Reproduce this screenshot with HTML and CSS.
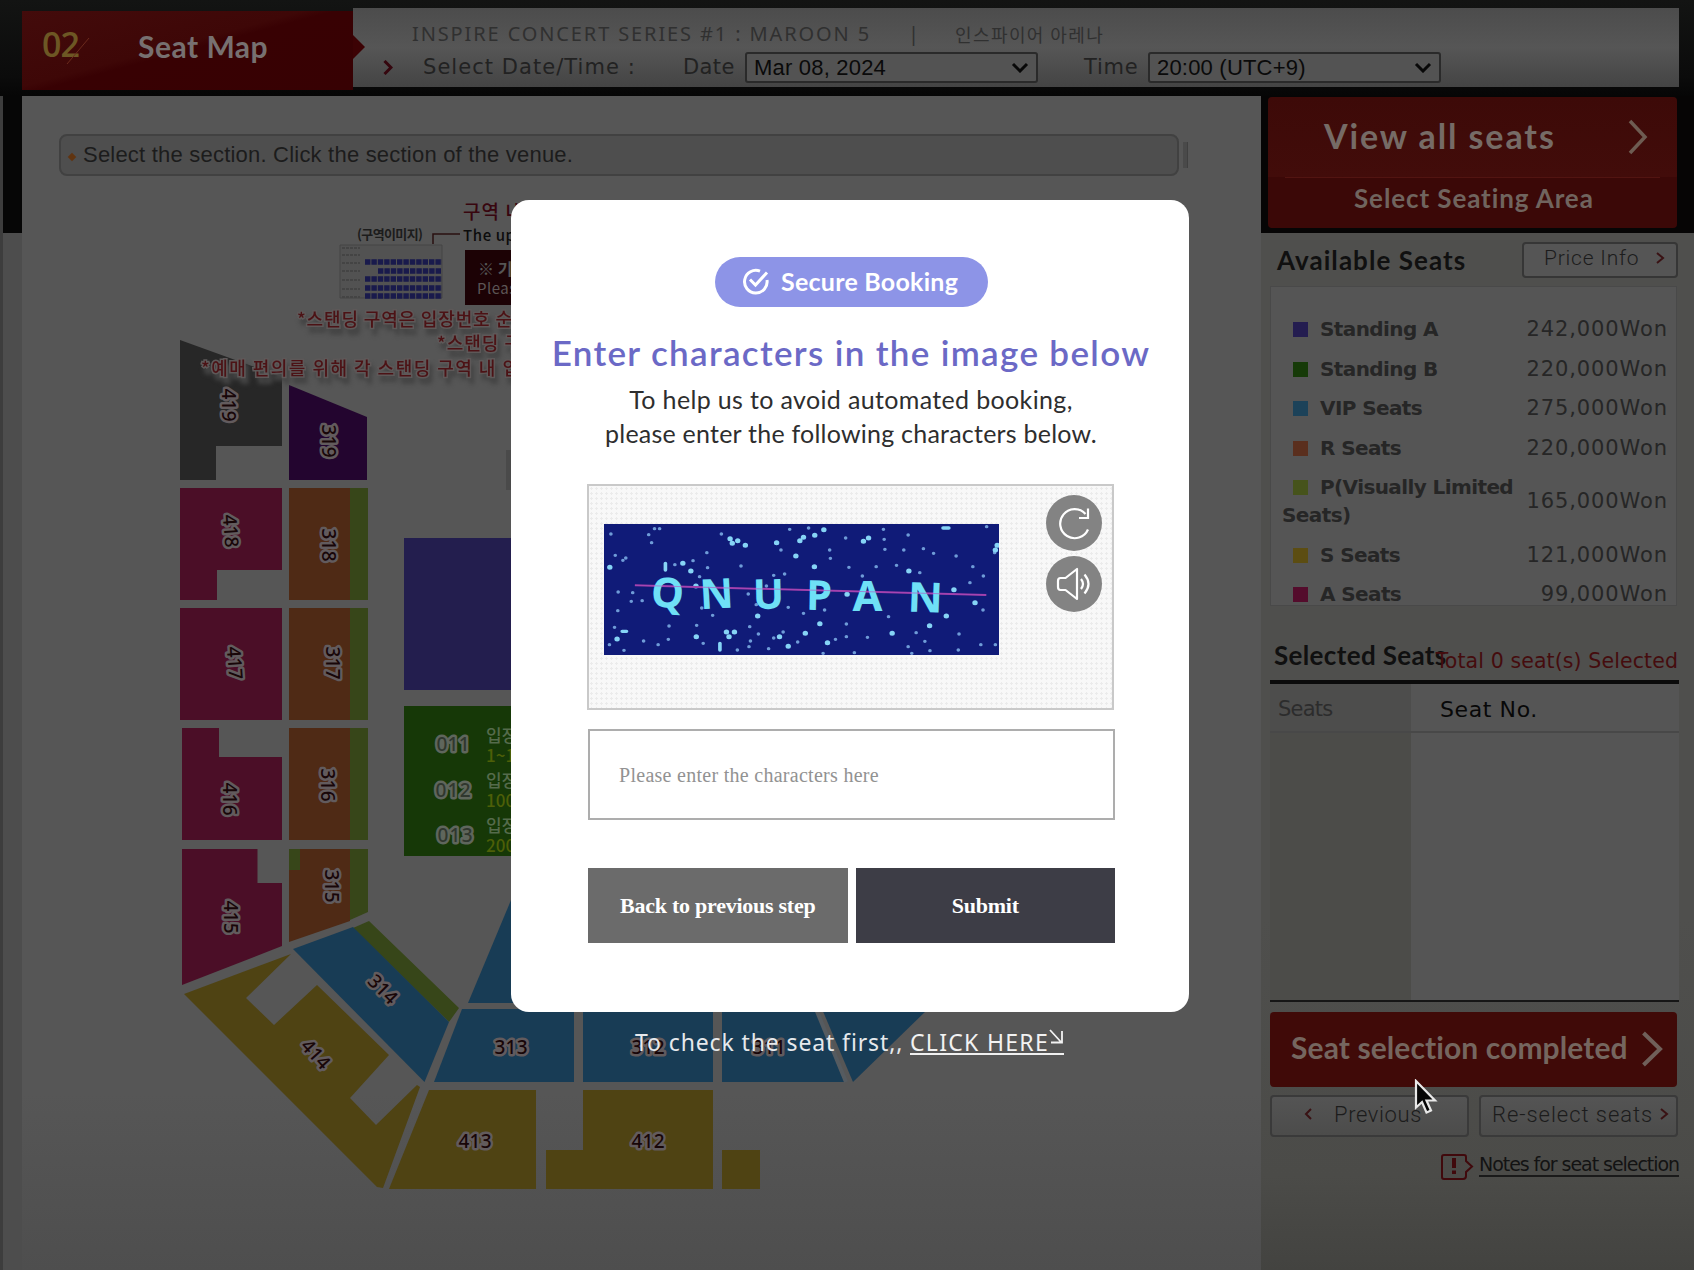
FILE: index.html
```html
<!DOCTYPE html>
<html lang="en">
<head>
<meta charset="utf-8">
<title>Seat Map</title>
<link rel="stylesheet" href="styles.css">
</head>
<body>
<div class="page">
  <header class="top">
    <div class="step"><span class="step-no">02</span><svg class="slash" width="24" height="28" viewBox="0 0 24 28"><path d="M23 1L1 27" stroke="#6b2a1c" fill="none"/></svg><h1 class="step-name">Seat Map</h1></div>
    <div class="info">
      <svg class="notch" width="12" height="24" viewBox="0 0 12 24"><path d="M0 0L12 12L0 24Z" fill="#3c0204"/></svg>
      <div class="info-line first"><span class="concert">INSPIRE CONCERT SERIES #1 : MAROON 5</span><span class="bar">|</span><span class="venue">인스파이어 아레나</span></div>
      <div class="info-line second">
        <svg class="chev" width="10" height="15" viewBox="0 0 10 15"><path d="M1.500 1L8 7.500L1.500 14" fill="none" stroke="#35060e" stroke-width="3"/></svg>
        <span class="lbl-dt">Select Date/Time :</span>
        <span class="lbl-date">Date</span>
        <div class="select date"><span>Mar 08, 2024</span><svg width="18" height="11" viewBox="0 0 18 11"><path d="M2 2L9 9L16 2" fill="none" stroke="#080808" stroke-width="3"/></svg></div>
        <span class="lbl-time">Time</span>
        <div class="select time"><span>20:00 (UTC+9)</span><svg width="18" height="11" viewBox="0 0 18 11"><path d="M2 2L9 9L16 2" fill="none" stroke="#080808" stroke-width="3"/></svg></div>
      </div>
    </div>
  </header>

  <div class="body">
    <div class="gutter"></div>
    <main class="main">
      <div class="notice-row"><div class="notice"><i class="diamond"></i><span>Select the section. Click the section of the venue.</span></div><i class="sliver"></i></div>
      <svg class="map" width="1239" height="1080" viewBox="22 190 1239 1080">
        <g font-family="'Noto Sans CJK KR', sans-serif">
          <text x="463" y="219" font-size="19" fill="#38060f" textLength="60" font-weight="500">구역 내</text>
          <text x="357" y="239" font-size="13" font-weight="700" fill="#1c1c1c" textLength="66">(구역이미지)</text>
          <text x="463" y="241" font-size="15" font-weight="500" fill="#0c0c0c" textLength="62">The upp</text>
          <path d="M433 244V234H460" fill="none" stroke="#2a1010" stroke-width="1.500"/>
          <path d="M340 245H442V298H340Z" fill="#525252" stroke="#444"/>
          <path d="M342 248h18M342 255h18M342 263h18M342 271h18M342 280h18M342 289h18M342 297h18" stroke="#444" stroke-width="2" stroke-dasharray="3 1"/>
          <path d="M365 262h77M378 271h64M365 279h77M365 288h77M365 296h77" stroke="#191a4c" stroke-width="5.500" stroke-dasharray="5.400 1"/>
          <rect x="465" y="250" width="60" height="55" fill="#1c0205"/>
          <text x="478" y="275" font-size="16" font-weight="700" fill="#555">※ 기</text>
          <text x="477" y="294" font-size="15" fill="#5c5555" textLength="48">Please</text>
        </g>
        <path fill="#272727" d="M180 340L282 377V446H216V480H180Z"/>
        <path fill="#23052f" d="M289 385L367 417V480H289Z"/>
        <g fill="#4b0e27">
          <path d="M180 488H282V570H217V600H180Z"/><path d="M180 608H282V720H180Z"/>
          <path d="M182 728H219V757H282V840H182Z"/><path d="M182 849H257.500V883H282V946L182 985Z"/>
        </g>
        <g fill="#4f2a15"><path d="M289 488H350V600H289ZM289 608H350V720H289ZM289 728H350V840H289ZM289 849H350V921L289 942Z"/></g>
        <g fill="#374619"><path d="M350 488H368V600H350ZM350 608H368V720H350ZM350 728H368V840H350ZM350 849H368V912L350 920ZM289 849H300V870H289ZM353 928L369 921L459 1008L449 1022Z"/></g>
        <path fill="#231e4e" d="M404 538H560V690H404Z"/>
        <path fill="#163807" d="M404 706H560V856H404Z"/>
        <path fill="#4a4a4a" d="M506 450H520V490H506Z"/>
        <g fill="#183c55">
          <path d="M293 949L353 927L449 1022L424.500 1082Z"/><path d="M468 1003L511 900H700V1003Z"/>
          <path d="M462 1009H574V1082H434Z"/><path d="M583 1009H713V1082H583Z"/>
          <path d="M722 1009H815L844.500 1082H722Z"/><path d="M822 1009H928L853 1082Z"/>
        </g>
        <g fill="#4f4313">
          <path d="M184 994L291 954L246 998L274 1025L317 985L389 1055L350 1098L376 1125L417 1085L420 1087L383 1188L377 1187Z"/>
          <path d="M429 1090H536V1189H389Z"/><path d="M583 1090H713V1189H546V1150H583Z"/><path d="M722 1150H760V1189H722Z"/>
        </g>
        <path d="M816 1009L846 1082" stroke="#555b60" stroke-width="4"/>
        <g class="caption">
          <text x="297" y="326" textLength="215">*스탠딩 구역은 입장번호 순</text>
          <text x="437" y="350" textLength="84">*스탠딩 구</text>
          <text x="201" y="375" textLength="318">*예매 편의를 위해 각 스탠딩 구역 내 입</text>
        </g>
        <g class="num">
          <text transform="translate(229 405) rotate(90)" y="7" textLength="33">419</text>
          <text transform="translate(329 441) rotate(90)" y="7" textLength="33">319</text>
          <text transform="translate(231 531) rotate(86)" y="7" textLength="33">418</text>
          <text transform="translate(329 545) rotate(90)" y="7" textLength="33">318</text>
          <text transform="translate(235 663) rotate(86)" y="7" textLength="33">417</text>
          <text transform="translate(333 663) rotate(90)" y="7" textLength="33">317</text>
          <text transform="translate(230 799) rotate(90)" y="7" textLength="33">416</text>
          <text transform="translate(328 785) rotate(90)" y="7" textLength="33">316</text>
          <text transform="translate(231 917) rotate(90)" y="7" textLength="33">415</text>
          <text transform="translate(332 886) rotate(90)" y="7" textLength="33">315</text>
          <text transform="translate(383 989) rotate(45)" y="7" textLength="33">314</text>
          <text transform="translate(316 1054) rotate(48)" y="7" textLength="33">414</text>
          <text x="511" y="1054" textLength="33">313</text>
          <text x="648" y="1054" textLength="33">312</text>
          <text x="769" y="1054" textLength="33">311</text>
          <text x="475" y="1148" textLength="33">413</text>
          <text x="648" y="1148" textLength="33">412</text>
          <text class="light" x="453" y="751" textLength="33">011</text>
          <text class="light" x="453" y="797" textLength="35">012</text>
          <text class="light" x="455" y="842" textLength="35">013</text>
        </g>
        <g class="gate">
          <text x="486" y="742" fill="#556b4c">입장</text><text x="486" y="762" class="y">1~100</text>
          <text x="486" y="787" fill="#556b4c">입장</text><text x="486" y="807" class="y">100~</text>
          <text x="486" y="832" fill="#556b4c">입장</text><text x="486" y="852" class="y">200~</text>
        </g>
      </svg>
    </main>

    <aside class="side">
      <div class="views">
        <div class="view-all"><span>View all seats</span><svg width="20" height="36" viewBox="0 0 20 36"><path d="M2 2L17 18L2 34" fill="none" stroke="#6e5c52" stroke-width="3.500"/></svg></div>
        <div class="select-area">Select Seating Area</div>
      </div>
      <div class="avail-head"><h2>Available Seats</h2><div class="btn price"><span>Price Info</span><svg width="9" height="12" viewBox="0 0 9 12"><path d="M1 1L7 6L1 11" fill="none" stroke="#3a1214" stroke-width="2"/></svg></div></div>
      <div class="prices">
        <div class="row"><span class="name"><i class="sw a"></i>Standing A</span><span class="won">242,000Won</span></div>
        <div class="row"><span class="name"><i class="sw b"></i>Standing B</span><span class="won">220,000Won</span></div>
        <div class="row"><span class="name"><i class="sw v"></i>VIP Seats</span><span class="won">275,000Won</span></div>
        <div class="row"><span class="name"><i class="sw r"></i>R Seats</span><span class="won">220,000Won</span></div>
        <div class="row tall"><span class="name"><i class="sw p"></i>P(Visually Limited<br>Seats)</span><span class="won">165,000Won</span></div>
        <div class="row"><span class="name"><i class="sw s"></i>S Seats</span><span class="won">121,000Won</span></div>
        <div class="row"><span class="name"><i class="sw m"></i>A Seats</span><span class="won">99,000Won</span></div>
      </div>
      <div class="sel-head"><h2>Selected Seats</h2><span class="total">Total 0 seat(s) Selected</span></div>
      <div class="table">
        <div class="th left">Seats</div><div class="th">Seat No.</div>
        <div class="td left"></div><div class="td"></div>
      </div>
      <div class="complete"><span>Seat selection completed</span><svg width="22" height="36" viewBox="0 0 22 36"><path d="M2.500 2L19 18L2.500 34" fill="none" stroke="#70605a" stroke-width="4"/></svg></div>
      <div class="pair">
        <div class="btn prev"><svg width="8" height="12" viewBox="0 0 8 12"><path d="M7 1L2 6L7 11" fill="none" stroke="#3a1214" stroke-width="2"/></svg><span>Previous</span></div>
        <div class="btn resel"><span>Re-select seats</span><svg width="9" height="12" viewBox="0 0 9 12"><path d="M1 1L7 6L1 11" fill="none" stroke="#3a1214" stroke-width="2"/></svg></div>
      </div>
      <div class="notes"><svg width="33" height="26" viewBox="0 0 33 26"><path d="M3 1H23Q25 1 25 3V7L31 12.500L25 18V22Q25 25 22 25H3Q1 25 1 23V3Q1 1 3 1Z" fill="none" stroke="#40090c" stroke-width="2"/><path d="M13 4V14M13 16.500V20" stroke="#40090c" stroke-width="4"/></svg><a>Notes for seat selection</a></div>
    </aside>
  </div>

  <section class="modal">
    <div class="pill"><svg width="28" height="28" viewBox="0 0 28 28"><path d="M18 3.200A11.300 11.300 0 1 0 25 12" fill="none" stroke="#fff" stroke-width="3"/><path d="M8 11.500L13.500 17L25 4.500" fill="none" stroke="#fff" stroke-width="3"/></svg><span>Secure Booking</span></div>
    <h2 class="title">Enter characters in the image below</h2>
    <p class="help"><span class="l1">To help us to avoid automated booking,</span><br><span class="l2">please enter the following characters below.</span></p>
    <div class="captcha">
      <svg class="shot" width="395" height="131" viewBox="93 162 1087 393" preserveAspectRatio="none">
        <rect x="93" y="162" width="1087" height="393" fill="#101b78"/>
        <g fill="none" stroke-linecap="round">
          <path stroke="#6f9cd8" stroke-width="10" d="M216 194h0M232 176h0M246 176h0M224 218h0M112 192h0M124 256h0M145 271h0M153 264h0M288 284h0M338 272h0M376 248h0M416 192h0M378 293h0M356 320h0M470 288h0M490 372h0M540 348h0M580 240h0M590 312h0M560 316h0M604 178h0M656 174h0M714 240h0M716 265h0M758 204h0M767 292h0M804 318h0M842 290h0M862 178h0M864 208h0M930 195h0M918 240h0M866 238h0M898 286h0M962 308h0M972 236h0M1000 250h0M1062 258h0M1100 338h0M1108 290h0M1146 170h0M1168 248h0M1137 318h0M132 366h0M172 368h0M131 422h0M168 394h0M198 392h0M122 472h0M108 524h0M148 541h0M202 513h0M242 524h0M270 508h0M272 468h0M348 466h0M366 520h0M392 436h0M362 414h0M496 513h0M494 470h0M492 530h0M460 540h0M518 492h0M560 504h0M586 486h0M546 536h0M626 516h0M696 550h0M730 508h0M760 462h0M760 500h0M782 548h0M818 502h0M952 488h0M976 514h0M990 542h0M1070 492h0M1068 540h0M1130 524h0M1170 524h0M1136 420h0M930 530h0M940 550h0M876 440h0M600 412h0M512 404h0M642 430h0M700 420h0"/>
          <path stroke="#86d4f6" stroke-width="15" d="M109 292h0M310 280h0M332 303h0M440 206h0M446 220h0M461 212h0M482 226h0M568 218h0M621 258h0M632 212h0M642 202h0M673 196h0M698 179h0M672 290h0M807 214h0M821 204h0M932 303h0M1175 226h0M1170 240h0M346 348h0M516 438h0M687 461h0M647 490h0M600 529h0M886 490h0M989 467h0M1035 438h0M1056 359h0M1114 398h0M347 500h0M129 507h0M430 486h0M437 500h0M452 486h0M708 518h0M762 373h0M576 500h0"/>
          <path stroke="#86d4f6" stroke-width="10" d="M262 280v20M1026 174h16M143 484h12M412 520v20"/>
        </g>
        <path d="M178 346L1145 375" stroke="#9a3ca4" stroke-width="6"/>
        <g class="letters">
          <text transform="translate(265 412) scale(.92 1) rotate(4)">Q</text><text transform="translate(405 415) scale(.92 1) rotate(-3)">N</text><text transform="translate(546 416) scale(.92 1) rotate(-1)">U</text><text transform="translate(684 420) scale(.92 1) rotate(1)">P</text><text transform="translate(818 424) scale(.96 1)">A</text><text transform="translate(976 426) scale(.96 1) rotate(2)">N</text>
        </g>
        <path d="M178 346L1145 375" stroke="#b04cc0" stroke-opacity=".6" stroke-width="3"/>
      </svg>
      <div class="tools">
        <svg width="56" height="56" viewBox="0 0 56 56"><circle cx="28" cy="28" r="28" fill="#838383"/><path d="M42 34.500A14.500 14.500 0 1 1 39.500 19" fill="none" stroke="#fff" stroke-width="2.200"/><path d="M42 13.500V23H33" fill="none" stroke="#fff" stroke-width="2.200"/></svg>
        <svg width="56" height="56" viewBox="0 0 56 56"><circle cx="28" cy="28" r="28" fill="#838383"/><path d="M31 13V43L19.500 34H14.500Q12 34 12 31V25Q12 22 14.500 22H19.500Z" fill="none" stroke="#fff" stroke-width="2.200" stroke-linejoin="round"/><path d="M35 23Q39 28 35 33M38.500 18.500Q46.500 28 38.500 37.500" fill="none" stroke="#fff" stroke-width="2.200"/></svg>
      </div>
    </div>
    <div class="field"><span>Please enter the characters here</span></div>
    <div class="actions"><div class="back">Back to previous step</div><div class="submit">Submit</div></div>
  </section>
  <div class="check-first"><span class="cf">To check the seat first,,</span><a><span>CLICK HERE</span><svg width="16" height="18" viewBox="0 0 16 18"><path d="M1 1L12 13M13 2V13.500H2" fill="none" stroke="#f2f2f2" stroke-width="1.800"/></svg></a></div>
  <svg class="cursor" width="24" height="37" viewBox="0 0 24 37"><path d="M2 2V28.500L8 23L12.500 33.500L17 31.500L12.500 21.500H21Z" fill="#050505" stroke="#e8e8e8" stroke-width="2.200"/></svg>
</div>
</body>
</html>
```
FILE: styles.css
```css
* { box-sizing: border-box; }
body { margin: 0; background: #555; }
h1, h2, p { margin: 0; }
svg { display: block; flex: none; }
.page { position: relative; width: 1694px; height: 1270px; overflow: hidden; background: #0c0c0c; font-family: "DejaVu Sans", sans-serif; white-space: nowrap; }

.top { display: flex; height: 96px; padding: 8px 15px 9px 22px; background: linear-gradient(#131413, #0b0b0b 80%, #060606); }
.step { display: flex; align-items: center; width: 331px; height: 79px; margin-top: 3px; padding-left: 20px; background: linear-gradient(165deg, #430b0b, #3e0707 45%, #380103 50%, #370103); }
.step-no { width: 38px; color: #6d5724; font: 600 34px/40px "Open Sans", sans-serif; letter-spacing: -1px; margin-top: -14px; }
.slash { margin-left: -14px; }
.step-name { margin: -9px 0 0 48px; color: #777070; font: 700 30px/40px Lato, sans-serif; letter-spacing: .5px; }
.info { position: relative; flex: 1; background: linear-gradient(#4c4c4c, #565656 50%, #444); }
.notch { position: absolute; left: 0; top: 27px; }
.info-line { display: flex; align-items: center; }
.first { height: 36px; padding: 16px 0 0 59px; color: #303030; font: 20px/24px "Noto Sans", sans-serif; }
.concert { width: 496px; letter-spacing: 1.88px; }
.bar { width: 47px; }
.venue { font: 18px/24px "Noto Sans CJK KR", sans-serif; letter-spacing: 1.4px; }
.second { height: 44px; margin-top: 1px; padding-left: 30px; color: #222; font-size: 21px; }
.lbl-dt { width: 260px; margin-left: 30px; letter-spacing: 1.05px; margin-top: -1px; }
.lbl-date { width: 62px; letter-spacing: .4px; margin-top: -1px; }
.lbl-time { width: 64px; margin-left: 46px; letter-spacing: .8px; margin-top: -1px; }
.select { display: flex; align-items: center; justify-content: space-between; width: 293px; height: 31px; padding: 0 7px 0 7px; border: 2px solid #2a2a2a; border-radius: 3px; background: #535353; color: #0a0a0a; font: 22px "Liberation Sans", sans-serif; letter-spacing: .2px; }
.select span { margin-top: 2px; }

.body { display: flex; height: 1174px; background: #555; }
.gutter { width: 22px; border-left: 3px solid #3d3d3d; background: linear-gradient(#060606 137px, #4d4d4d 137px); }
.main { width: 1239px; padding-top: 38px; background: linear-gradient(#565656 85%, #4e4e4e); }
.notice-row { display: flex; align-items: center; height: 42px; padding-left: 37px; }
.notice { display: flex; align-items: center; width: 1120px; height: 42px; padding-left: 8px; border: 2px solid #414141; border-radius: 8px; background: #4e4e4e; color: #1c1c1c; font: 22px "Liberation Sans", sans-serif; }
.notice span { margin: 0 0 0 8px; letter-spacing: .21px; }
.diamond { width: 6px; height: 6px; margin-top: 3px; background: #603410; transform: rotate(45deg); }
.sliver { width: 5px; height: 26px; margin-left: 4px; background: #4a4a4a; border-right: 1px solid #404040; }
.map { margin-top: 14px; }
.caption text { font: 500 18px "Noto Sans CJK KR", sans-serif; fill: #4c1215; stroke: #5d5858; stroke-width: 3px; paint-order: stroke; filter: drop-shadow(3px 6px 2px #444); }
.num text { font: 500 19px "Noto Sans", sans-serif; text-anchor: middle; fill: #180608; stroke: #625b5d; stroke-width: 5px; stroke-linejoin: round; paint-order: stroke; }
.num .light { fill: #30372e; stroke: #5f665c; }
.gate text { font: 500 17px "Noto Sans CJK KR", sans-serif; }
.gate .y { fill: #4d5f08; }

.side { width: 433px; background: linear-gradient(#4f4f4d 70%, #4b4b48 92%, #434340); }
.views { height: 137px; padding: 1px 17px 5px 7px; background: #060505; }
.view-all { display: flex; align-items: center; justify-content: space-between; height: 80px; margin: 0; padding: 0 29px 0 56px; border-radius: 4px 4px 0 0; background: linear-gradient(#3d0a08, #420c0a); color: #766b66; font: 700 34px Lato, sans-serif; letter-spacing: 1.9px; }
.view-all span { margin-top: -3px; }
.select-area { height: 51px; border-radius: 0 0 4px 4px; padding-left: 86px; background: linear-gradient(#521411, #521411) 17px 0 / 375px 1px no-repeat, #3b0807; color: #70645e; font: 700 26px/43px Lato, sans-serif; letter-spacing: .9px; }
.avail-head { display: flex; justify-content: space-between; align-items: flex-start; height: 53px; padding: 8px 16px 0 16px; }
.side h2 { color: #101010; font: 700 26px/38px Lato, sans-serif; letter-spacing: 1.05px; }
.btn { display: flex; align-items: center; border: 2px solid #363636; border-radius: 4px; background: #555; color: #1c1c1c; font: 300 21px Roboto, sans-serif; }
.price { width: 156px; height: 36px; margin-top: 1px; padding: 0 11px 4px 20px; justify-content: space-between; letter-spacing: .8px; }
.prices { width: 407px; height: 320px; margin-left: 9px; padding: 22px 9px 0 11px; overflow: hidden; border: 1px solid #494949; background: #555; }
.row { display: flex; justify-content: space-between; align-items: center; height: 39.7px; font-size: 21px; color: #262626; }
.row.tall { height: 67px; }
.name { font-weight: 700; font-size: 20px; line-height: 28px; letter-spacing: -.6px; }
.won { letter-spacing: .9px; margin-right: -1px; }
.sw { display: inline-block; width: 15px; height: 15px; margin: 0 12px -1px 11px; background: #241d50; }
.sw.b { background: #163a08; } .sw.v { background: #1c4259; } .sw.r { background: #5a2f1e; } .sw.p { background: #46531b; } .sw.s { background: #5c4d12; } .sw.m { background: #540c2c; }
.sel-head { display: flex; justify-content: space-between; height: 74px; padding: 30px 16px 0 13px; }
.sel-head h2 { width: 150px; letter-spacing: .35px; }
.total { color: #450c0e; font-size: 20.500px; line-height: 51px; letter-spacing: .1px; }
.table { display: grid; grid-template-columns: 141px 268px; grid-template-rows: 49px 267px; width: 409px; margin-left: 9px; border-top: 4px solid #0b0b0b; border-bottom: 2px solid #161616; }
.th { padding: 0 0 4px 29px; border-bottom: 2px solid #484848; background: #555; color: #080808; font-size: 22px; line-height: 51px; letter-spacing: .6px; }
.th.left { padding-left: 8px; background: #4d4d4c; color: #2c2c2c; font-size: 21px; letter-spacing: -.8px; }
.td { background: #555; } .td.left { background: #4c4c49; }
.complete { display: flex; align-items: center; justify-content: space-between; width: 407px; height: 75px; margin: 10px 0 0 9px; padding: 0 14px 2px 21px; border-radius: 4px; background: #400a08; color: #75665f; font: 700 30px Lato, sans-serif; letter-spacing: .1px; }
.complete span { margin-top: -3px; }
.pair { display: flex; gap: 10px; margin: 8px 0 0 9px; }
.pair .btn { width: 199px; height: 42px; padding-bottom: 4px; background: linear-gradient(#545454, #4c4c4b); border-color: #3a3a3a; font-size: 22px; }
.prev { padding-left: 32px; gap: 22px; letter-spacing: .6px; }
.resel { padding-left: 11px; gap: 7px; letter-spacing: .95px; }
.notes { display: flex; justify-content: flex-end; align-items: center; gap: 5px; margin: 15px 15px 0 0; height: 30px; color: #131313; font-size: 19px; }
.notes a { height: 24px; line-height: 22px; border-bottom: 2px solid #1a1a1a; letter-spacing: -1.05px; margin-top: -4px; }

.modal { position: absolute; left: 511px; top: 200px; width: 678px; height: 812px; padding: 57px 74px 0 76px; border-radius: 18px; background: #fff; }
.pill { display: flex; align-items: center; width: 273px; height: 50px; margin-left: 128px; padding-left: 27px; gap: 11px; border-radius: 25px; background: #8d94e7; color: #fff; font: 700 25px Lato, sans-serif; letter-spacing: .25px; }
.pill span { margin-top: -3px; }
.title { margin: 20px -60px 0; text-align: center; color: #6b69c6; font: 600 35px/50px Lato, sans-serif; letter-spacing: 1.33px; }
.help { margin: 5px -60px 0; text-align: center; color: #2e2e2e; font: 25px/34px Lato, sans-serif; }
.l1 { letter-spacing: .35px; } .l2 { letter-spacing: .23px; }
.captcha { display: flex; justify-content: space-between; width: 527px; height: 226px; margin-top: 34px; padding: 9px 10px 0 15px; border: 2px solid #c9c9c9; background: radial-gradient(circle, #ebebeb 1px, transparent 1.2px) 0 0 / 5px 5px, #f8f8f8; }
.shot { margin-top: 29px; }
.letters text { font: 700 124px "Noto Sans", sans-serif; text-anchor: middle; fill: #6fe0f6; }
.tools { display: flex; flex-direction: column; gap: 5px; }
.field { display: flex; align-items: center; width: 527px; height: 91px; margin: 19px 0 0 1px; padding: 2px 0 0 29px; border: 2px solid #adadad; color: #929292; font: 20px "Liberation Serif", serif; letter-spacing: .28px; }
.actions { display: flex; gap: 8px; margin: 48px 0 0 1px; color: #fff; font: 700 22px/76px "Liberation Serif", serif; letter-spacing: -.25px; text-align: center; }
.actions div { width: 260px; height: 75px; }
.back { background: #6b6b6b; } .submit { background: #3d3d46; }
.check-first { position: absolute; left: 635px; top: 1028px; display: flex; color: #e6e9ec; font: 23px/29px "Noto Sans", sans-serif; }
.cf { width: 275px; letter-spacing: .88px; }
.check-first a { display: flex; width: 154px; height: 27px; border-bottom: 2px solid #f0f0f0; color: #f2f2f2; letter-spacing: 1.3px; }
.check-first a svg { margin-top: 1px; }
.cursor { position: absolute; left: 1414px; top: 1079px; }
```
